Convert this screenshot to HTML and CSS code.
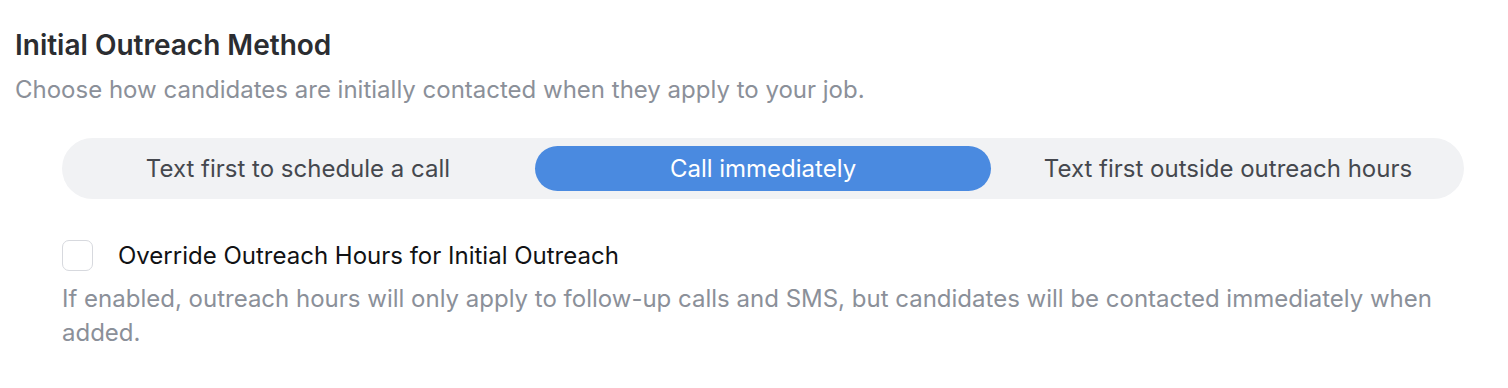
FILE: index.html
```html
<!DOCTYPE html>
<html>
<head>
  <meta charset="UTF-8">
  <title>Initial Outreach Method</title>
  <link rel="stylesheet" href="styles.css">
</head>
<body>
  <section class="outreach">
    <h2 class="outreach-title">Initial Outreach Method</h2>
    <p class="outreach-desc">Choose how candidates are initially contacted when they apply to your job.</p>

    <div class="outreach-body">
      <!-- Method selector -->
      <div class="segmented">
        <button class="segment">Text first to schedule a call</button>
        <button class="segment active">Call immediately</button>
        <button class="segment">Text first outside outreach hours</button>
      </div>

      <!-- Override option -->
      <label class="override">
        <span class="checkbox"></span>
        <span class="override-label">Override Outreach Hours for Initial Outreach</span>
      </label>
      <p class="override-help">If enabled, outreach hours will only apply to follow-up calls and SMS, but candidates will be contacted immediately when added.</p>
    </div>
  </section>
</body>
</html>
```

FILE: styles.css
```css
/* ========== PAGE ========== */
body {
  margin: 0;
  background: #ffffff;
  font-family: Inter, "Noto Sans", sans-serif;
}

.outreach {
  padding: 28px 15px 0 15px;
}

.outreach-title {
  margin: 0;
  font-size: 28px;
  font-weight: 600;
  line-height: 34px;
  color: #2b2d31;
}

.outreach-desc {
  margin: 11px 0 0 0;
  font-size: 24px;
  line-height: 34px;
  color: #8b9099;
}

.outreach-body {
  padding: 31px 29px 0 47px;
}

/* ========== SEGMENTED CONTROL ========== */
.segmented {
  display: flex;
  gap: 9px;
  padding: 8px;
  background: #f1f2f4;
  border-radius: 31px;
}

.segment {
  flex: 1;
  height: 45px;
  border: none;
  border-radius: 23px;
  background: transparent;
  font-family: inherit;
  font-size: 24px;
  color: #45484e;
  cursor: pointer;
}

.segment.active {
  background: #4a8ae0;
  color: #ffffff;
}

/* ========== OVERRIDE ========== */
.override {
  display: flex;
  align-items: center;
  gap: 25px;
  margin-top: 41px;
}

.checkbox {
  box-sizing: border-box;
  width: 31px;
  height: 31px;
  border: 1.5px solid #d7d9de;
  border-radius: 7px;
  background: #ffffff;
}

.override-label {
  font-size: 24px;
  color: #111214;
}

.override-help {
  margin: 11px 0 0 0;
  font-size: 24px;
  line-height: 34px;
  color: #8b9099;
}
```
